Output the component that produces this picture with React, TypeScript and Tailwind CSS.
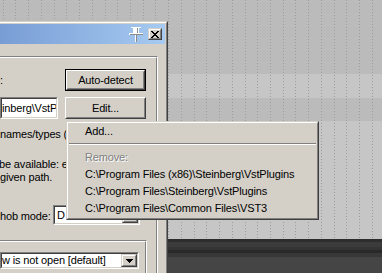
import React from "react";

const LINES = Array.from({ length: 31 }, (_, k) => Math.round(2.7 + 12.73 * k)).filter((x) => x < 382);

function Raised({ className = "", children }: { className?: string; children?: React.ReactNode }) {
  return (
    <div className={"border border-t-white border-l-white border-r-[#404040] border-b-[#404040] bg-[#d4d0c8] " + className}>
      <div className="h-full w-full border border-t-[#d4d0c8] border-l-[#d4d0c8] border-r-[#808080] border-b-[#808080] flex items-center justify-center">
        {children}
      </div>
    </div>
  );
}

function CapBtn({ className = "", children }: { className?: string; children?: React.ReactNode }) {
  return (
    <div className={"border border-t-[#d4d0c8] border-l-[#d4d0c8] border-r-[#404040] border-b-[#404040] bg-[#d4d0c8] " + className}>
      <div className="h-full w-full border border-t-white border-l-white border-r-[#808080] border-b-[#808080] flex items-center justify-center">
        {children}
      </div>
    </div>
  );
}

function Sunken({ className = "", children }: { className?: string; children?: React.ReactNode }) {
  return (
    <div className={"border border-t-[#808080] border-l-[#808080] border-r-white border-b-white " + className}>
      <div className="h-full w-full border border-t-[#404040] border-l-[#404040] border-r-[#d4d0c8] border-b-[#d4d0c8] bg-white flex items-center overflow-hidden">
        {children}
      </div>
    </div>
  );
}

function Arrow() {
  return (
    <svg width="7" height="4" viewBox="0 0 7 4">
      <rect x="0" y="0" width="7" height="1" fill="#000" />
      <rect x="1" y="1" width="5" height="1" fill="#000" />
      <rect x="2" y="2" width="3" height="1" fill="#000" />
      <rect x="3" y="3" width="1" height="1" fill="#000" />
    </svg>
  );
}

function CloseGlyph() {
  const rows: [number, number][][] = [
    [[0, 2], [6, 2]],
    [[1, 2], [5, 2]],
    [[2, 4]],
    [[3, 2]],
    [[2, 4]],
    [[1, 2], [5, 2]],
    [[0, 2], [6, 2]],
  ];
  return (
    <svg width="8" height="7" viewBox="0 0 8 7">
      {rows.map((r, y) => r.map(([x, w], i) => <rect key={y + "-" + i} x={x} y={y} width={w} height={1} fill="#000" />))}
    </svg>
  );
}

function Pin() {
  return (
    <svg width="14" height="17" viewBox="0 0 14 17">
      <rect x="2" y="1" width="10" height="1" fill="#fff" />
      <rect x="4" y="2" width="6" height="5" fill="#fff" />
      <rect x="8" y="2" width="1" height="5" fill="#8a8a8a" />
      <rect x="0" y="7" width="14" height="2" fill="#fff" />
      <rect x="1" y="8" width="13" height="1" fill="#8a8a8a" />
      <rect x="6" y="9" width="1" height="7" fill="#fff" />
      <rect x="7" y="9" width="1" height="7" fill="#8a8a8a" />
    </svg>
  );
}

export default function App() {
  return (
    <div className="relative w-[382px] h-[273px] overflow-hidden font-['Liberation_Sans',Arial,sans-serif] text-[11px] tracking-[-0.15px] text-black">
      {/* canvas background */}
      <div className="flex flex-col">
        <div className="h-[74px] bg-[#babbba]" />
        <div className="h-[24px] bg-[#c5c6c5]" />
        <div className="h-[23px] bg-[#babbba]" />
        <div className="h-[118px] bg-[#c5c6c5]" />
        <div className="h-[34px] flex flex-col">
          <div className="h-[3px] bg-[#2d2d2d]" />
          <div className="h-[5px] bg-[#3b3b3b]" />
          <div className="h-[3px] bg-[#343434]" />
          <div className="h-[3px] bg-[#292929]" />
          <div className="h-[4px] bg-[#373737]" />
          <div className="flex-1 bg-[#454545]" />
        </div>
      </div>
      <svg className="absolute left-0 top-0" width="382" height="239">
        {LINES.map((x) => (
          <line key={x} x1={x + 0.5} y1={0} x2={x + 0.5} y2={239} stroke="#9b9c9b" strokeWidth="1" strokeDasharray="1 2" />
        ))}
      </svg>

      {/* dialog window */}
      <div className="absolute left-0 top-[21px] w-[168px] h-[252px] border-t border-r border-t-[#d4d0c8] border-r-[#404040] bg-[#d4d0c8]">
        <div className="h-full border-t border-r border-t-white border-r-[#808080] bg-[#d4d0c8]">
          <div className="h-full border-t border-r border-[#d4d0c8] bg-[#d4d0c8] flex flex-col">
            <div className="h-[20px] shrink-0 flex items-center justify-end gap-[5px] pr-[3px] bg-[linear-gradient(to_right,#789dd5,#a6caf0)]">
              <Pin />
              <CapBtn className="w-[14px] h-[12px]">
                <CloseGlyph />
              </CapBtn>
            </div>
            <div className="flex-1 pt-[12px] pr-[7px]">
              <div className="w-[158px] border-t border-r border-t-[#808080] border-r-white">
                <div className="border-t border-r border-t-white border-r-[#808080] h-[220px]">
                  <div className="mt-[11px] h-[22px] flex">
                    <div className="w-[65px] flex items-center leading-[13px]">:</div>
                    <div className="w-[81px] h-[22px] border border-black">
                      <Raised className="h-full w-full">Auto-detect</Raised>
                    </div>
                  </div>
                  <div className="mt-[6px] h-[22px] flex">
                    <Sunken className="w-[58px] h-[22px]">
                      <span className="whitespace-nowrap leading-[13px]">inberg\VstP</span>
                    </Sunken>
                    <Raised className="ml-[7px] w-[81px] h-[22px]">Edit...</Raised>
                  </div>
                  <div className="mt-[9px] h-[13px] leading-[13px] whitespace-nowrap">names/types (</div>
                  <div className="mt-[17px] h-[13px] leading-[13px] whitespace-nowrap -ml-[1px]">be available: e</div>
                  <div className="h-[13px] leading-[13px] whitespace-nowrap">given path.</div>
                  <div className="mt-[21px] h-[20px] flex items-center">
                    <div className="w-[53px] pt-[3px] leading-[13px] whitespace-nowrap">hob mode:</div>
                    <Sunken className="w-[87px] h-[20px]">
                      <span className="flex-1 pl-[2px] leading-[13px]">D</span>
                      <CapBtn className="w-[16px] h-full">
                        <Arrow />
                      </CapBtn>
                    </Sunken>
                  </div>
                  <div className="mt-[15px] w-[147px] border-t border-r border-t-[#808080] border-r-white">
                    <div className="border-t border-r border-t-white border-r-[#808080] h-[40px] pt-[10px]">
                      <Sunken className="w-[139px] h-[17px]">
                        <span className="flex-1 leading-[13px] whitespace-nowrap">w is not open [default]</span>
                        <CapBtn className="w-[16px] h-full">
                          <Arrow />
                        </CapBtn>
                      </Sunken>
                    </div>
                  </div>
                </div>
              </div>
            </div>
          </div>
        </div>
      </div>

      {/* popup menu */}
      <div className="absolute left-[66px] top-[121px] w-[253px] h-[99px] border border-t-[#d4d0c8] border-l-[#d4d0c8] border-r-[#404040] border-b-[#404040] bg-[#d4d0c8]">
        <div className="h-full border border-t-white border-l-white border-r-[#808080] border-b-[#808080] bg-[#d4d0c8] flex flex-col">
          <div className="h-[17px] leading-[17px] pl-[17px] whitespace-nowrap">Add...</div>
          <div className="h-[9px] pt-[3px] px-px">
            <div className="h-[2px] border-t border-b border-t-[#808080] border-b-white" />
          </div>
          <div className="h-[17px] leading-[17px] pl-[17px] whitespace-nowrap text-[#808080] [text-shadow:1px_1px_0_#ffffff]">Remove:</div>
          <div className="h-[17px] leading-[17px] pl-[17px] whitespace-nowrap">C:\Program Files (x86)\Steinberg\VstPlugins</div>
          <div className="h-[17px] leading-[17px] pl-[17px] whitespace-nowrap">C:\Program Files\Steinberg\VstPlugins</div>
          <div className="h-[17px] leading-[17px] pl-[17px] whitespace-nowrap">C:\Program Files\Common Files\VST3</div>
        </div>
      </div>
    </div>
  );
}
